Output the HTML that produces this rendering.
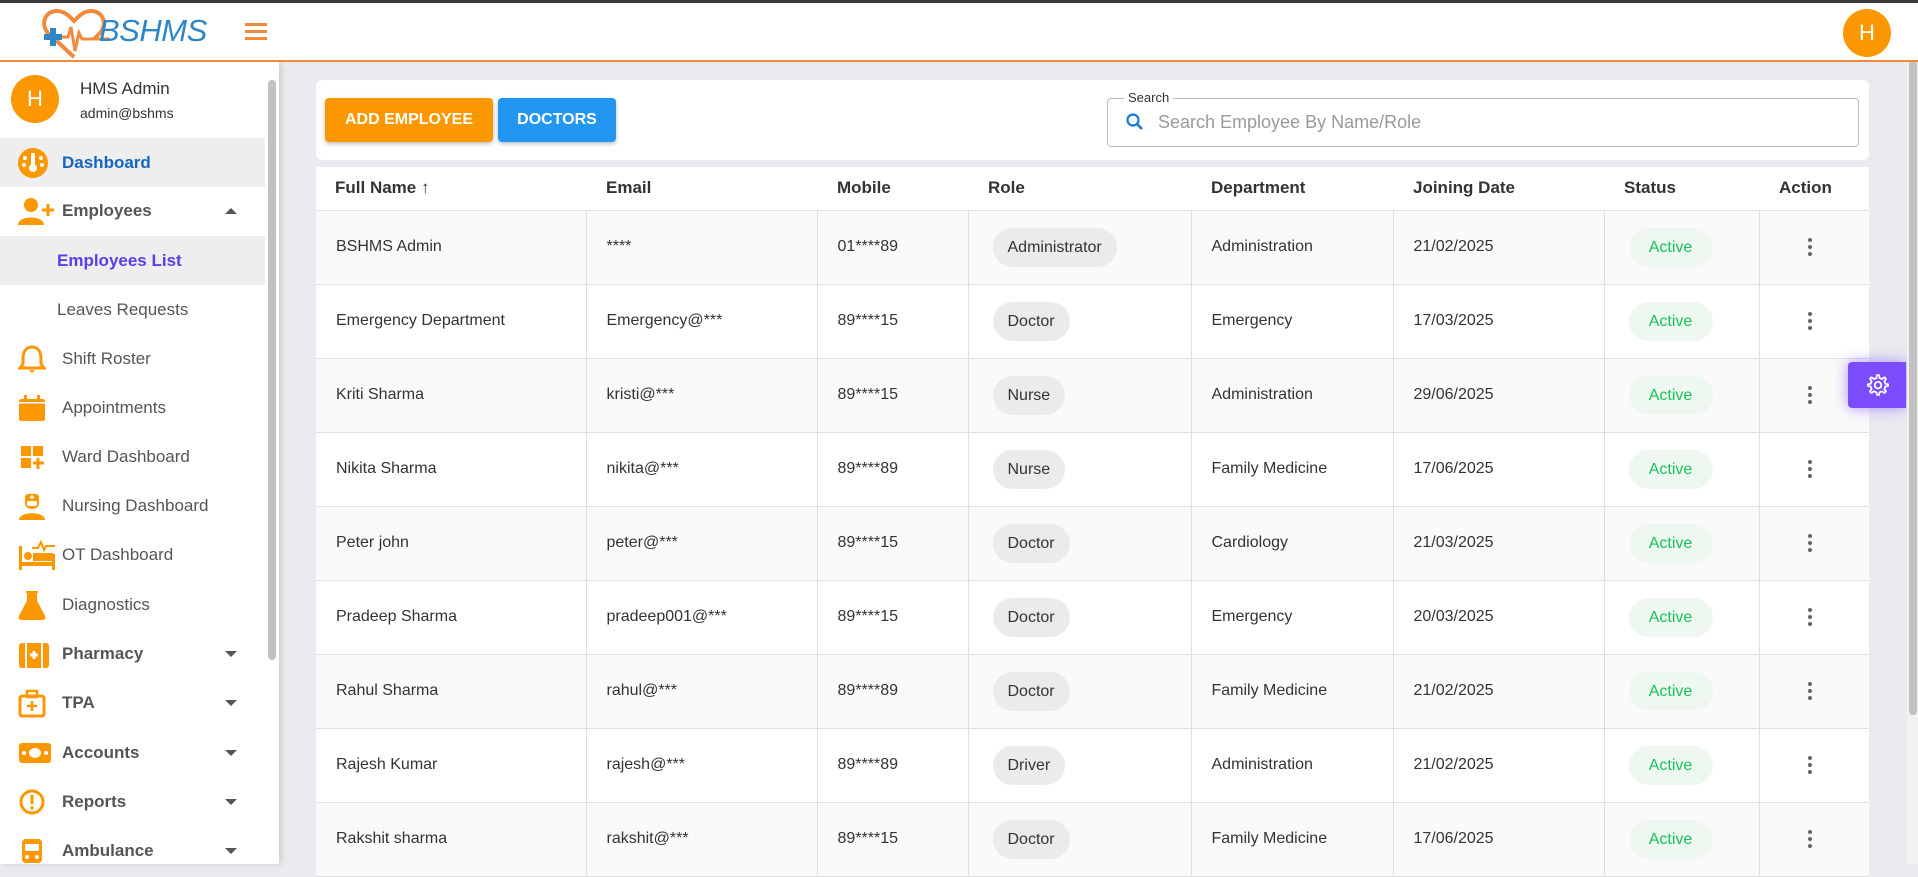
<!DOCTYPE html>
<html><head><meta charset="utf-8"><style>
*{box-sizing:border-box;margin:0;padding:0}
body{width:1918px;height:864px;overflow:hidden;font-family:"Liberation Sans",sans-serif;background:#e9ebef;position:relative;color:#333}
.topbar{position:absolute;left:0;top:0;width:1918px;height:3px;background:#3a3a3a}
.header{position:absolute;left:0;top:3px;width:1918px;height:59px;background:#fff;border-bottom:2px solid #f08a3c;z-index:3}
.side{position:absolute;left:0;top:62px;width:279px;height:802px;background:#fff;box-shadow:3px 0 6px rgba(0,0,0,.12);z-index:2}
.sb{position:absolute;left:268px;top:18px;width:8px;height:580px;background:#c1c1c1;border-radius:4px}
.av{position:absolute;width:48px;height:48px;border-radius:50%;background:#fb9700;color:#fff;font-size:22px;display:flex;align-items:center;justify-content:center}
.mi{position:absolute;left:0;width:265px;height:49px;display:flex;align-items:center;font-size:17px;color:#555}
.mi svg{position:absolute;left:18px}
.mi span{position:absolute;left:62px}
.mi.b span{font-weight:bold;color:#555}
.car{position:absolute;left:225px;width:0;height:0;border-left:6px solid transparent;border-right:6px solid transparent;border-top:6px solid #555}
.card{position:absolute;background:#fff;border-radius:6px}
.btn{position:absolute;top:98px;height:44px;border-radius:4px;color:#fff;font-weight:bold;font-size:16px;display:flex;align-items:center;justify-content:center;box-shadow:0 2px 4px rgba(0,0,0,.25)}
table{border-collapse:collapse;table-layout:fixed;position:absolute;left:316px;top:167px;width:1553px;font-size:16px}
th{height:43px;text-align:left;padding-left:20px;font-weight:bold;color:#333;background:#fff;border-bottom:1px solid #e0e0e0;font-size:17px}
td{height:74px;padding-left:20px;border-right:1px solid #e0e0e0;border-bottom:1px solid #e0e0e0;color:#333}
td:last-child{border-right:none}
tr:nth-child(odd) td{background:#fafafa}
tr:nth-child(even) td{background:#fff}
.chip{display:inline-block;background:#ebebeb;border-radius:20px;padding:0 15px;height:39px;line-height:39px;margin-left:4px}
.act{display:inline-block;background:#eef8f1;color:#17c25b;border-radius:20px;width:84px;height:39px;line-height:39px;text-align:center;margin-left:4px}
.dots{margin-left:28px;width:4px}
.dots i{display:block;width:4px;height:4px;background:#666;border-radius:2px;margin:3px 0}
</style></head><body>
<div class="topbar"></div>
<div class="header">
<svg style="position:absolute;left:40px;top:4px" width="70" height="54" viewBox="0 0 70 54"><path d="M34 50 L8 26 C0 17 5 4 17 4 C25 4 30 10 34 14 C38 10 43 4 51 4 C63 4 68 17 60 26 L54 32" fill="none" stroke="#f08a3c" stroke-width="4"/><path d="M18 30 L28 30 L31 20 L35 44 L39 26 L42 32 L70 32" fill="none" stroke="#f08a3c" stroke-width="3"/><path d="M4 30 H22 M13 21 V39" stroke="#2f86c6" stroke-width="6"/></svg>
<div style="position:absolute;left:99px;top:10px;font-size:31px;font-style:italic;color:#2f86c6;letter-spacing:-0.5px">BSHMS</div>
<svg style="position:absolute;left:245px;top:20px" width="22" height="18"><rect y="0" width="22" height="3" fill="#f08a3c"/><rect y="7" width="22" height="3" fill="#f08a3c"/><rect y="14" width="22" height="3" fill="#f08a3c"/></svg>
<div class="av" style="left:1843px;top:6px">H</div>
</div>
<div class="side">
<div class="sb"></div>
<div class="av" style="left:11px;top:13px">H</div>
<div style="position:absolute;left:80px;top:17px;font-size:17px;color:#333">HMS Admin</div>
<div style="position:absolute;left:80px;top:43px;font-size:14px;color:#333">admin@bshms</div>
<div class="mi" style="top:76px;background:#eee"><svg width="30" height="30"><circle cx="15" cy="15" r="15" fill="#fb9700"/><rect x="13" y="5" width="4" height="14" fill="#fff"/><circle cx="15" cy="20" r="4" fill="#fff"/><circle cx="7" cy="10" r="2" fill="#fff"/><circle cx="23" cy="10" r="2" fill="#fff"/><circle cx="6" cy="17" r="2" fill="#fff"/><circle cx="24" cy="17" r="2" fill="#fff"/></svg><span style="color:#1565c0;font-weight:bold">Dashboard</span></div>
<div class="mi b" style="top:124px"><svg width="36" height="30"><circle cx="13" cy="9" r="7" fill="#fb9700"/><path d="M0 29 C0 19 26 19 26 29Z" fill="#fb9700"/><path d="M24 14 H36 M30 8 V20" stroke="#fb9700" stroke-width="3"/></svg><span>Employees</span><div class="car" style="border-top:none;border-bottom:6px solid #555"></div></div>
<div class="mi" style="top:174px;background:#eee"><span style="left:57px;color:#5b3ee8;font-weight:bold">Employees List</span></div>
<div class="mi" style="top:223px"><span style="left:57px">Leaves Requests</span></div>
<div class="mi" style="top:272px"><svg width="28" height="28"><path d="M14 2 C7 2 5 8 5 14 V19 L2 23 H26 L23 19 V14 C23 8 21 2 14 2Z" fill="none" stroke="#fb9700" stroke-width="3"/><path d="M11 25 H17 L14 28Z" fill="#fb9700"/></svg><span>Shift Roster</span></div>
<div class="mi" style="top:321px"><svg width="28" height="28"><rect x="1" y="5" width="26" height="22" rx="2" fill="#fb9700"/><rect x="6" y="1" width="3" height="6" fill="#fb9700"/><rect x="19" y="1" width="3" height="6" fill="#fb9700"/><rect x="1" y="8" width="26" height="1.5" fill="#fff"/></svg><span>Appointments</span></div>
<div class="mi" style="top:370px"><svg width="28" height="28"><rect x="3" y="3" width="10" height="10" fill="#fb9700"/><rect x="15" y="3" width="10" height="10" fill="#fb9700"/><rect x="3" y="15" width="10" height="10" fill="#fb9700"/><path d="M15 20H26M20 15V26" stroke="#fb9700" stroke-width="3"/></svg><span>Ward Dashboard</span></div>
<div class="mi" style="top:419px"><svg width="28" height="28"><path d="M7 4 C7 1 21 1 21 4 V11 C21 15 18 17 14 17 C10 17 7 15 7 11Z" fill="#fb9700"/><rect x="9" y="9" width="10" height="5" rx="2" fill="#fff"/><path d="M12 5H16M14 3V7" stroke="#fff" stroke-width="1.5"/><path d="M1 28 C1 19 27 19 27 28Z" fill="#fb9700"/></svg><span>Nursing Dashboard</span></div>
<div class="mi" style="top:468px"><svg width="38" height="30"><rect x="1" y="6" width="3" height="24" fill="#fb9700"/><rect x="34" y="14" width="3" height="16" fill="#fb9700"/><rect x="1" y="22" width="36" height="4" fill="#fb9700"/><circle cx="10" cy="16" r="4" fill="#fb9700"/><rect x="15" y="13" width="20" height="8" fill="#fb9700"/><path d="M14 8 H20 L23 2 L26 10 L28 6 H37" fill="none" stroke="#fb9700" stroke-width="2"/></svg><span>OT Dashboard</span></div>
<div class="mi" style="top:518px"><svg width="28" height="30"><path d="M8 2H20 M10 2V11 L2 26 C1 28 2 29 4 29H24C26 29 27 28 26 26L18 11V2" fill="#fb9700" stroke="#fb9700" stroke-width="2"/></svg><span>Diagnostics</span></div>
<div class="mi b" style="top:567px"><svg width="32" height="30"><rect x="1" y="4" width="30" height="25" rx="3" fill="#fb9700"/><rect x="7" y="4" width="2" height="25" fill="#fff"/><rect x="23" y="4" width="2" height="25" fill="#fff"/><path d="M12 16H20M16 12V20" stroke="#fff" stroke-width="3"/></svg><span>Pharmacy</span><div class="car"></div></div>
<div class="mi b" style="top:616px"><svg width="28" height="30"><rect x="2" y="8" width="24" height="20" rx="2" fill="none" stroke="#fb9700" stroke-width="3"/><rect x="9" y="3" width="10" height="6" fill="none" stroke="#fb9700" stroke-width="2.5"/><path d="M9 18H19M14 13V23" stroke="#fb9700" stroke-width="2.5"/></svg><span>TPA</span><div class="car"></div></div>
<div class="mi b" style="top:666px"><svg width="34" height="30"><rect x="1" y="5" width="32" height="20" rx="3" fill="#fb9700"/><ellipse cx="17" cy="15" rx="6" ry="5" fill="#fff"/><circle cx="6" cy="15" r="2" fill="#fff"/><circle cx="28" cy="15" r="2" fill="#fff"/></svg><span>Accounts</span><div class="car"></div></div>
<div class="mi b" style="top:715px"><svg width="28" height="30"><circle cx="14" cy="15" r="11" fill="none" stroke="#fb9700" stroke-width="3"/><rect x="12.5" y="8" width="3" height="9" fill="#fb9700"/><circle cx="14" cy="21" r="1.8" fill="#fb9700"/></svg><span>Reports</span><div class="car"></div></div>
<div class="mi b" style="top:764px"><svg width="28" height="30"><rect x="4" y="3" width="20" height="24" rx="4" fill="#fb9700"/><rect x="7" y="8" width="14" height="7" fill="#fff"/><circle cx="9" cy="21" r="2" fill="#fff"/><circle cx="19" cy="21" r="2" fill="#fff"/></svg><span>Ambulance</span><div class="car"></div></div>
</div>
<div class="card" style="left:316px;top:80px;width:1553px;height:80px"></div>
<div class="btn" style="left:325px;width:168px;background:#fb9700">ADD EMPLOYEE</div>
<div class="btn" style="left:498px;width:118px;background:#2196f3">DOCTORS</div>
<div style="position:absolute;left:1107px;top:98px;width:752px;height:49px;border:1px solid #bbb;border-radius:4px"></div>
<div style="position:absolute;left:1124px;top:90px;background:#fff;padding:0 4px;font-size:13px;color:#333">Search</div>
<svg style="position:absolute;left:1126px;top:113px" width="18" height="18"><circle cx="7" cy="7" r="5.5" fill="none" stroke="#1976d2" stroke-width="2.2"/><path d="M11 11 L16 16" stroke="#1976d2" stroke-width="2.5"/></svg>
<div style="position:absolute;left:1158px;top:112px;font-size:18px;color:#9a9a9a">Search Employee By Name/Role</div>
<div class="card" style="left:316px;top:167px;width:1553px;height:700px"></div>
<table>
<colgroup><col style="width:270px"><col style="width:231px"><col style="width:151px"><col style="width:223px"><col style="width:202px"><col style="width:211px"><col style="width:155px"><col style="width:110px"></colgroup>
<thead><tr><th style="padding-left:19px">Full Name ↑</th><th>Email</th><th>Mobile</th><th>Role</th><th>Department</th><th>Joining Date</th><th>Status</th><th>Action</th></tr></thead>
<tbody>
<tr><td>BSHMS Admin</td><td>****</td><td>01****89</td><td><span class="chip">Administrator</span></td><td>Administration</td><td>21/02/2025</td><td><span class="act">Active</span></td><td><div class="dots"><i></i><i></i><i></i></div></td></tr>
<tr><td>Emergency Department</td><td>Emergency@***</td><td>89****15</td><td><span class="chip">Doctor</span></td><td>Emergency</td><td>17/03/2025</td><td><span class="act">Active</span></td><td><div class="dots"><i></i><i></i><i></i></div></td></tr>
<tr><td>Kriti Sharma</td><td>kristi@***</td><td>89****15</td><td><span class="chip">Nurse</span></td><td>Administration</td><td>29/06/2025</td><td><span class="act">Active</span></td><td><div class="dots"><i></i><i></i><i></i></div></td></tr>
<tr><td>Nikita Sharma</td><td>nikita@***</td><td>89****89</td><td><span class="chip">Nurse</span></td><td>Family Medicine</td><td>17/06/2025</td><td><span class="act">Active</span></td><td><div class="dots"><i></i><i></i><i></i></div></td></tr>
<tr><td>Peter john</td><td>peter@***</td><td>89****15</td><td><span class="chip">Doctor</span></td><td>Cardiology</td><td>21/03/2025</td><td><span class="act">Active</span></td><td><div class="dots"><i></i><i></i><i></i></div></td></tr>
<tr><td>Pradeep Sharma</td><td>pradeep001@***</td><td>89****15</td><td><span class="chip">Doctor</span></td><td>Emergency</td><td>20/03/2025</td><td><span class="act">Active</span></td><td><div class="dots"><i></i><i></i><i></i></div></td></tr>
<tr><td>Rahul Sharma</td><td>rahul@***</td><td>89****89</td><td><span class="chip">Doctor</span></td><td>Family Medicine</td><td>21/02/2025</td><td><span class="act">Active</span></td><td><div class="dots"><i></i><i></i><i></i></div></td></tr>
<tr><td>Rajesh Kumar</td><td>rajesh@***</td><td>89****89</td><td><span class="chip">Driver</span></td><td>Administration</td><td>21/02/2025</td><td><span class="act">Active</span></td><td><div class="dots"><i></i><i></i><i></i></div></td></tr>
<tr><td>Rakshit sharma</td><td>rakshit@***</td><td>89****15</td><td><span class="chip">Doctor</span></td><td>Family Medicine</td><td>17/06/2025</td><td><span class="act">Active</span></td><td><div class="dots"><i></i><i></i><i></i></div></td></tr>
</tbody></table>
<div style="position:absolute;left:1848px;top:362px;width:58px;height:46px;background:#7c4dff;border-radius:4px 0 0 4px;box-shadow:0 0 14px rgba(124,77,255,.6);display:flex;align-items:center;justify-content:center">
<svg width="24" height="24" viewBox="0 0 24 24"><path d="M12 2 L14 2 L14.5 5 L17 6 L19.5 4.3 L21 5.8 L19.4 8.3 L20.4 10.8 L23 11.3 V13 L20.4 13.5 L19.4 16 L21 18.5 L19.5 20 L17 18.3 L14.5 19.4 L14 22 H12 L11.5 19.4 L9 18.3 L6.5 20 L5 18.5 L6.6 16 L5.6 13.5 L3 13 V11.3 L5.6 10.8 L6.6 8.3 L5 5.8 L6.5 4.3 L9 6 L11.5 5Z" fill="none" stroke="#fff" stroke-width="1.8" stroke-linejoin="round"/><circle cx="13" cy="12.2" r="3.3" fill="none" stroke="#fff" stroke-width="1.8"/></svg></div>
<div style="position:absolute;left:1907px;top:62px;width:11px;height:802px;background:#f1f1f1"></div>
<div style="position:absolute;left:1909px;top:40px;width:8px;height:675px;background:#c1c1c1;border-radius:4px"></div>
</body></html>
